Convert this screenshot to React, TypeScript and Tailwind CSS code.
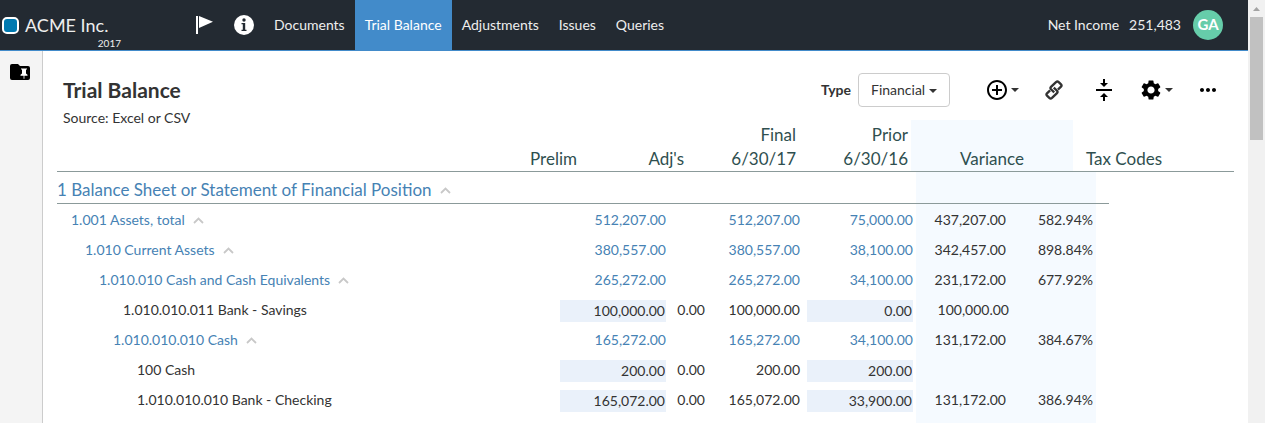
import { MdAddCircleOutline, MdMoreHoriz, MdSettings, MdVerticalAlignCenter } from "react-icons/md";
import clsx from "clsx";

type Row = {
  name: string;
  indent: string;
  kind: "group" | "account";
  prelim: string;
  adj?: string;
  final: string;
  prior: string;
  variance?: string;
  percent?: string;
};

const rows: Row[] = [
  { name: "1.001 Assets, total", indent: "pl-[14px]", kind: "group", prelim: "512,207.00", final: "512,207.00", prior: "75,000.00", variance: "437,207.00", percent: "582.94%" },
  { name: "1.010 Current Assets", indent: "pl-[28px]", kind: "group", prelim: "380,557.00", final: "380,557.00", prior: "38,100.00", variance: "342,457.00", percent: "898.84%" },
  { name: "1.010.010 Cash and Cash Equivalents", indent: "pl-[42px]", kind: "group", prelim: "265,272.00", final: "265,272.00", prior: "34,100.00", variance: "231,172.00", percent: "677.92%" },
  { name: "1.010.010.011 Bank - Savings", indent: "pl-[66px]", kind: "account", prelim: "100,000.00", adj: "0.00", final: "100,000.00", prior: "0.00", variance: "100,000.00" },
  { name: "1.010.010.010 Cash", indent: "pl-[56px]", kind: "group", prelim: "165,272.00", final: "165,272.00", prior: "34,100.00", variance: "131,172.00", percent: "384.67%" },
  { name: "100 Cash", indent: "pl-[80px]", kind: "account", prelim: "200.00", adj: "0.00", final: "200.00", prior: "200.00" },
  { name: "1.010.010.010 Bank - Checking", indent: "pl-[80px]", kind: "account", prelim: "165,072.00", adj: "0.00", final: "165,072.00", prior: "33,900.00", variance: "131,172.00", percent: "386.94%" },
];

const navItems = ["Documents", "Trial Balance", "Adjustments", "Issues", "Queries"];

const bodyGrid = "grid grid-cols-[1fr_106px_39px_95px_113px_93px_90px_13px]";

function Caret({ className }: { className?: string }) {
  return (
    <svg viewBox="0 0 8 4" className={clsx("h-1 w-2", className)} aria-hidden="true">
      <path d="M0 0h8L4 4z" fill="currentColor" />
    </svg>
  );
}

function ChevronUp() {
  return (
    <svg viewBox="0 0 11 7" className="h-[7px] w-[11px] text-[#c8c8c8]" aria-hidden="true">
      <path d="M1 6l4.500-4.500L10 6" fill="none" stroke="currentColor" strokeWidth="1.800" />
    </svg>
  );
}

function ChainIcon() {
  return (
    <svg
      viewBox="0 0 18 20"
      className="h-5 w-[18px]"
      fill="none"
      stroke="currentColor"
      strokeWidth="2.300"
      strokeLinejoin="round"
      aria-hidden="true"
    >
      <path d="M9.200 12.400L6 9.200Q4.900 8 6 6.900L11 2.100Q12.400 0.900 13.700 2.100L16 4.400Q17.100 5.500 16 6.700L12.900 9.700" />
      <path d="M8.800 7.600L12 10.800Q13.100 12 12 13.100L7 17.900Q5.600 19.100 4.300 17.900L2 15.600Q0.900 14.500 2 13.300L5.100 10.300" />
    </svg>
  );
}

function TopBar() {
  return (
    <header className="flex h-[51px] shrink-0 items-stretch border-b border-[#428bca] bg-[#232a32] text-sm text-[#eeeeee]">
      <a href="#home" className="flex w-[187px] gap-[6px] pl-[2px]">
        <span className="mt-[17px] size-[17px] rounded-[5px] border-2 border-white bg-[#0079b0]" />
        <span className="flex w-24 flex-col">
          <span className="mt-[13px] text-lg leading-6">ACME Inc.</span>
          <span className="text-right text-[10px] leading-3">2017</span>
        </span>
      </a>
      <button type="button" aria-label="Flag" className="px-2">
        <svg viewBox="0 0 19 18" className="h-[18px] w-[19px] fill-white" aria-hidden="true">
          <path d="M1 0h2v18H1zM4 0l14 5.800L4 12z" />
        </svg>
      </button>
      <button type="button" aria-label="Information" className="pr-[10px] pl-3">
        <svg viewBox="0 0 20 20" className="size-5" aria-hidden="true">
          <circle cx="10" cy="10" r="10" fill="#fff" />
          <circle cx="10" cy="5" r="1.700" fill="#232a32" />
          <path d="M7.500 8h3.700v6.800h1.300V16h-5v-1.200h1.300V9.200H7.500z" fill="#232a32" />
        </svg>
      </button>
      <nav className="flex">
        {navItems.map((item) => (
          <a
            key={item}
            href={`#${item.toLowerCase().replace(" ", "-")}`}
            className={clsx("flex items-center px-[10px]", item === "Trial Balance" && "bg-[#428bca] text-white")}
          >
            {item}
          </a>
        ))}
      </nav>
      <div className="ml-auto flex items-center pr-[25px]">
        <span>Net Income</span>
        <span className="ml-[10px]">251,483</span>
        <button type="button" className="ml-3 size-[30px] rounded-full bg-[#66cdaa] text-[15px] font-bold text-white">
          GA
        </button>
      </div>
    </header>
  );
}

function SideRail() {
  return (
    <aside className="w-[43px] shrink-0 border-r border-[#cccccc] bg-[#f4f4f4] pt-[13px] pl-[10px]">
      <button type="button" aria-label="Pinned folder" className="block">
        <svg viewBox="0 0 20 16" className="h-4 w-5" aria-hidden="true">
          <path d="M2 0h6l2 2h8a2 2 0 0 1 2 2v10a2 2 0 0 1-2 2H2a2 2 0 0 1-2-2V2a2 2 0 0 1 2-2z" fill="#000" />
          <path d="M11 4.500h6v1h-1v4l1.500 1.200v1h-3.100v3h-.8v-3h-3.100v-1L12 9.500v-4h-1z" fill="#fff" />
        </svg>
      </button>
    </aside>
  );
}

function Toolbar() {
  return (
    <div className="flex h-[34px] items-center text-black">
      <label htmlFor="type" className="mr-[7px] text-sm font-bold text-[#333333]">
        Type
      </label>
      <div className="relative text-[#333333]">
        <select id="type" className="h-[34px] w-[92px] appearance-none rounded border border-[#cccccc] bg-white pl-3 text-sm">
          <option>Financial</option>
        </select>
        <Caret className="pointer-events-none absolute top-4 right-[13px]" />
      </div>
      <button type="button" aria-label="Add" className="ml-[35px] flex items-center gap-[2px]">
        <MdAddCircleOutline className="size-6" />
        <Caret className="text-[#333333]" />
      </button>
      <button type="button" aria-label="Link" className="ml-[26px] text-[#333333]">
        <ChainIcon />
      </button>
      <button type="button" aria-label="Collapse rows" className="ml-[29px]">
        <MdVerticalAlignCenter className="size-6" />
      </button>
      <button type="button" aria-label="Settings" className="ml-[23px] flex items-center gap-[2px]">
        <MdSettings className="size-6" />
        <Caret className="text-[#333333]" />
      </button>
      <button type="button" aria-label="More" className="ml-[23px]">
        <MdMoreHoriz className="size-6" />
      </button>
    </div>
  );
}

function Amount({ label, value, editable }: { label: string; value: string; editable: boolean }) {
  if (!editable) return <>{value}</>;
  return (
    <input
      aria-label={label}
      defaultValue={value}
      className="mt-[6px] block h-[22px] w-[106px] bg-[#eaf1fa] pr-px text-right text-[#333333]"
    />
  );
}

function BalanceTable() {
  return (
    <table className="block text-[#333333]">
      <thead className="block">
        <tr className="grid grid-cols-[1fr_106px_107px_112px_115px_162px_161px] border-b border-[#8b9a9a] text-[17px] leading-6 text-[#2f4f4f]">
          <th />
          <th className="self-end text-right font-normal">Prelim</th>
          <th className="self-end text-right font-normal">Adj's</th>
          <th className="self-end text-right font-normal">
            Final
            <br />
            6/30/17
          </th>
          <th className="self-end pt-[3px] pr-[3px] text-right font-normal">
            Prior
            <br />
            6/30/16
          </th>
          <th className="flex items-end justify-center bg-[#f5faff] font-normal">Variance</th>
          <th className="self-end pl-[13px] text-left font-normal">Tax Codes</th>
        </tr>
      </thead>
      <tbody className="mr-[125px] block text-sm leading-8">
        <tr className={clsx(bodyGrid, "h-8 grid-rows-[31px] border-b border-[#8b9a9a]")}>
          <td colSpan={5} className="col-span-5 text-[17px] leading-9 text-[#4682b4]">
            <button type="button" className="flex items-center gap-2">
              1 Balance Sheet or Statement of Financial Position
              <ChevronUp />
            </button>
          </td>
          <td colSpan={2} className="col-span-2 ml-[3px] bg-[#f5faff]" />
        </tr>
        {rows.map((row) => {
          const group = row.kind === "group";
          const tone = group && "text-[#4682b4]";
          return (
            <tr key={row.name} className={clsx(bodyGrid, "grid-rows-[30px]")}>
              <td className={clsx(row.indent, tone)}>
                {group ? (
                  <button type="button" className="flex items-center gap-2">
                    {row.name}
                    <ChevronUp />
                  </button>
                ) : (
                  row.name
                )}
              </td>
              <td className={clsx("text-right", tone)}>
                <Amount label={`${row.name} prelim`} value={row.prelim} editable={!group} />
              </td>
              <td className="text-right">{row.adj}</td>
              <td className={clsx("text-right", tone)}>{row.final}</td>
              <td className={clsx("flex justify-end text-right", tone)}>
                <Amount label={`${row.name} prior`} value={row.prior} editable={!group} />
              </td>
              {row.percent ? (
                <>
                  <td className="ml-[3px] bg-[#f5faff] text-right">{row.variance}</td>
                  <td className="bg-[#f5faff] pr-[3px] text-right">{row.percent}</td>
                </>
              ) : (
                <td colSpan={2} className="col-span-2 ml-[3px] bg-[#f5faff] pr-[87px] text-right">
                  {row.variance}
                </td>
              )}
            </tr>
          );
        })}
        <tr className={clsx(bodyGrid, "h-[30px]")}>
          <td colSpan={5} className="col-span-5" />
          <td colSpan={2} className="col-span-2 ml-[3px] bg-[#f5faff]" />
        </tr>
      </tbody>
    </table>
  );
}

function ScrollTrack() {
  return (
    <div className="flex w-[17px] shrink-0 flex-col items-center bg-[#f1f1f1]" aria-hidden="true">
      <svg viewBox="0 0 17 17" className="size-[17px]">
        <path d="M5 11h7L8.500 7z" fill="#a3a3a3" />
      </svg>
      <div className="h-[123px] w-[13px] bg-[#c1c1c1]" />
    </div>
  );
}

export default function App() {
  return (
    <div className="flex h-screen overflow-hidden bg-white font-['Lato',sans-serif]">
      <div className="flex min-w-0 flex-1 flex-col">
        <TopBar />
        <div className="flex min-h-0 flex-1">
          <SideRail />
          <main className="min-w-0 flex-1 overflow-hidden px-[14px]">
            <div className="flex h-[69px] justify-between pt-[22px] pr-[14px] pl-[6px] text-[#333333]">
              <div>
                <h1 className="text-[21px] leading-[34px] font-bold">Trial Balance</h1>
                <p className="text-sm leading-[22px]">Source: Excel or CSV</p>
              </div>
              <Toolbar />
            </div>
            <BalanceTable />
          </main>
        </div>
      </div>
      <ScrollTrack />
    </div>
  );
}
